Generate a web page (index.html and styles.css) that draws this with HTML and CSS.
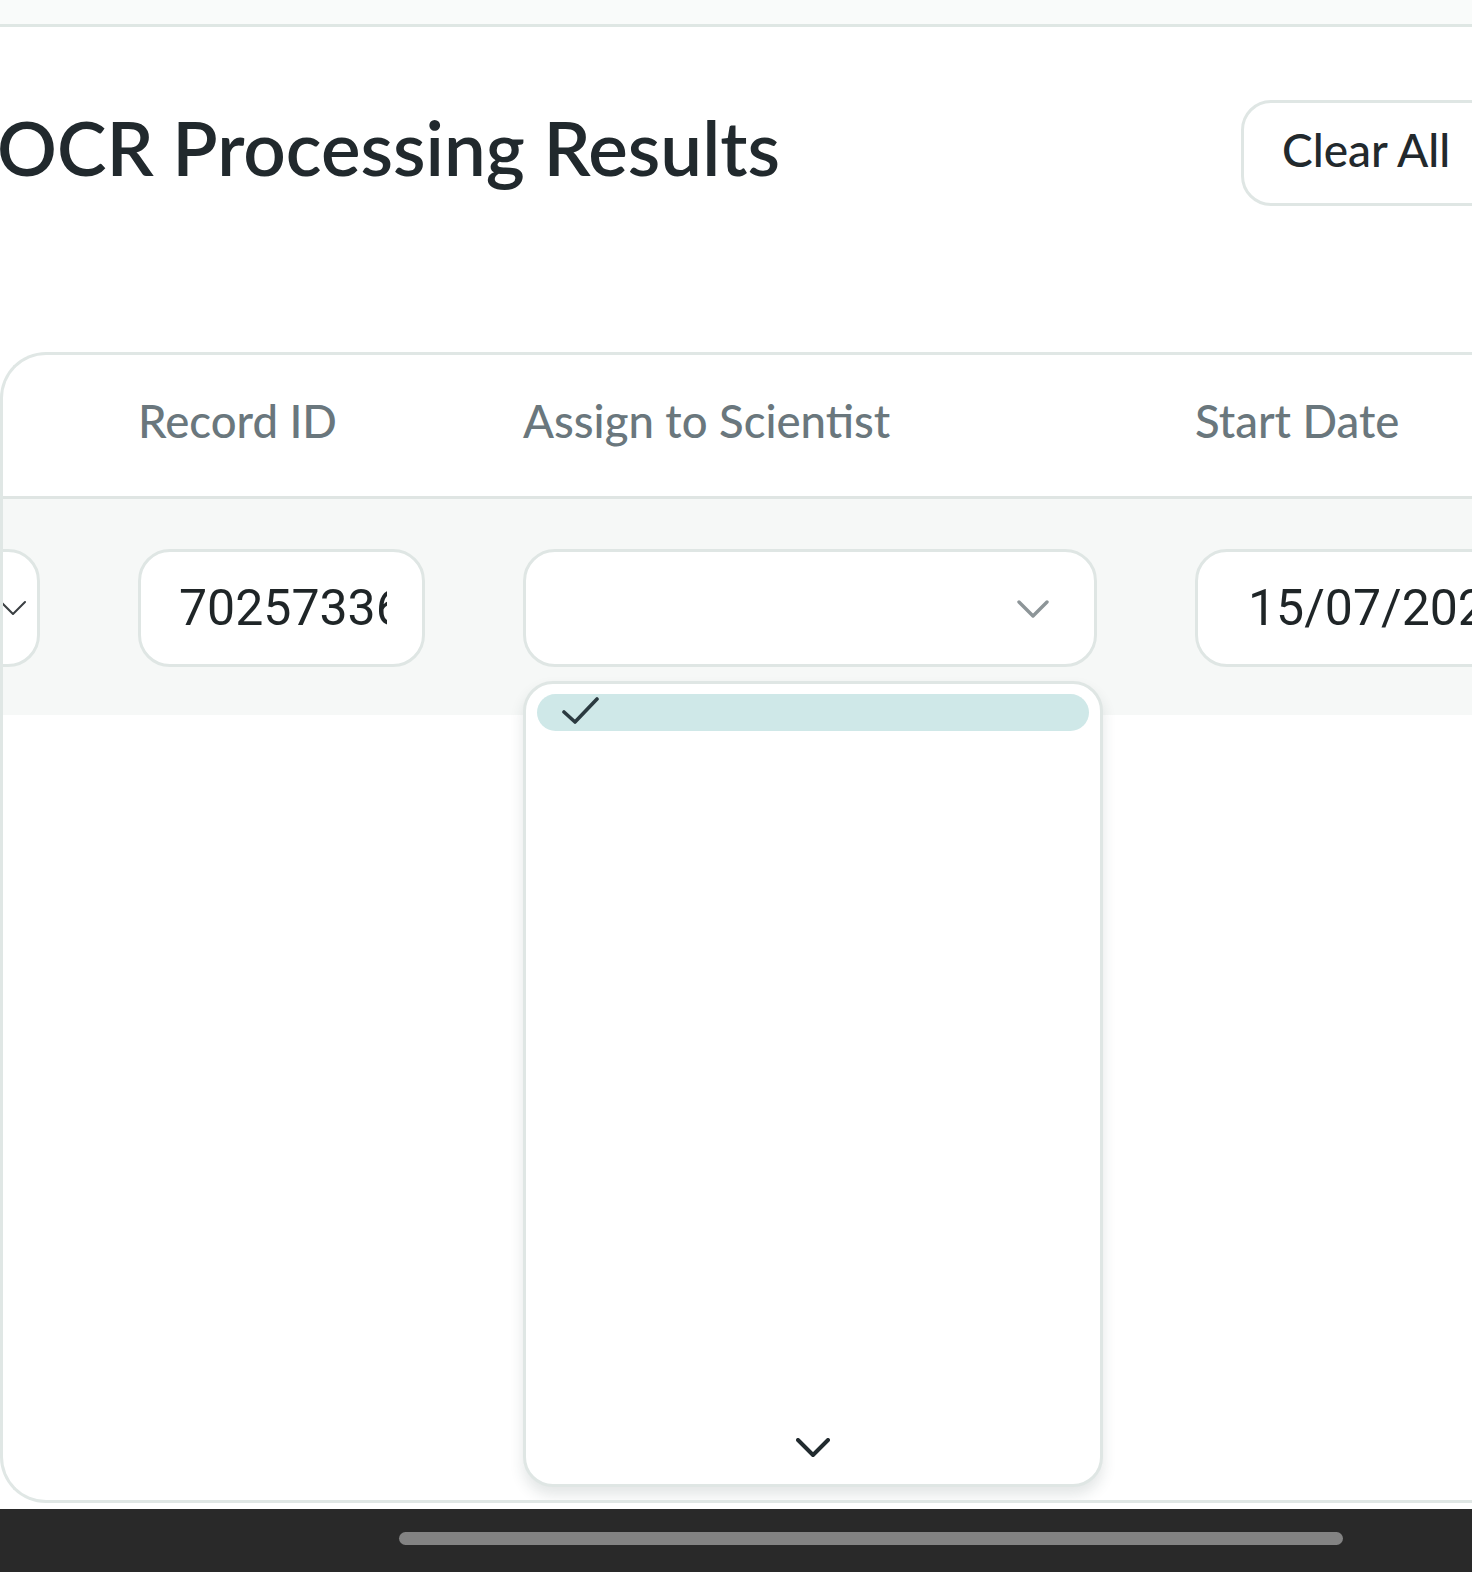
FILE: index.html
```html
<!DOCTYPE html>
<html>
<head>
<meta charset="utf-8">
<link rel="stylesheet" href="styles.css">
</head>
<body>
<div class="page">
  <div class="topbar"></div>
  <div class="head">
    <h1 class="title">OCR Processing Results</h1>
    <button class="clear">Clear All</button>
  </div>
  <div class="card">
    <div class="grid thead">
      <div class="th"></div>
      <div class="th">Record ID</div>
      <div class="th">Assign to Scientist</div>
      <div class="th">Start Date</div>
    </div>
    <div class="grid trow">
      <div class="field select-left">
        <svg class="chev-left" width="28" height="16" viewBox="0 0 28 16"><path d="M2 2 L14 14 L26 2" fill="none" stroke="#3a3f42" stroke-width="2" stroke-linecap="round" stroke-linejoin="round"/></svg>
      </div>
      <div class="field"><div class="val">70257336</div></div>
      <div class="field select-main">
        <svg class="chev-gray" width="32" height="19" viewBox="0 0 32 19"><path d="M2 2 L16 16 L30 2" fill="none" stroke="#8d9598" stroke-width="3.4" stroke-linecap="round" stroke-linejoin="round"/></svg>
        <div class="dropdown">
          <div class="option">
            <svg class="check" width="38" height="28" viewBox="0 0 38 28"><path d="M2 15 L13 25 L35 2" fill="none" stroke="#2b3a40" stroke-width="3.6" stroke-linecap="round" stroke-linejoin="round"/></svg>
          </div>
          <div class="spacer"></div>
          <svg class="chev-down" width="34" height="20" viewBox="0 0 34 20"><path d="M2 2 L17 17 L32 2" fill="none" stroke="#222b2f" stroke-width="4" stroke-linecap="round" stroke-linejoin="round"/></svg>
        </div>
      </div>
      <div class="field date"><div class="val">15/07/2025</div></div>
    </div>
  </div>
  <div class="navbar"><div class="thumb"></div></div>
</div>
</body>
</html>
```
FILE: styles.css
```css
html, body {
  margin: 0;
  padding: 0;
  background: #ffffff;
  overflow: hidden;
}
.page {
  width: 1472px;
  height: 1572px;
  display: flex;
  flex-direction: column;
  overflow: hidden;
}
.topbar {
  height: 24px;
  flex: none;
  background: #f9fbfa;
  border-bottom: 3px solid #dfe7e4;
}
.head {
  flex: none;
  margin-top: 73px;
  height: 106px;
  display: flex;
  align-items: center;
  margin-right: -30px;
}
.title {
  margin: 0 0 12px -3px;
  font-family: "Lato", "Liberation Sans", sans-serif;
  font-weight: 600;
  font-size: 74.5px;
  line-height: 1;
  color: #21292d;
  white-space: nowrap;
}
.clear {
  margin-left: auto;
  height: 106px;
  width: 261px;
  box-sizing: border-box;
  padding: 0 0 8px 38px;
  text-align: left;
  background: #ffffff;
  border: 3px solid #dfe6e4;
  border-radius: 30px;
  font-family: "Lato", "Liberation Sans", sans-serif;
  font-weight: 500;
  font-size: 46px;
  color: #22292d;
}
.card {
  flex: 1;
  margin-top: 146px;
  margin-bottom: 6px;
  border: 3px solid #e0e7e5;
  border-right: none;
  border-radius: 46px 0 0 46px;
  overflow: hidden;
  display: flex;
  flex-direction: column;
}
.grid {
  display: grid;
  grid-template-columns: 240px 287px 574px 320px;
  column-gap: 98px;
  margin-left: -203px;
  width: calc(100% + 203px);
}
.thead {
  height: 141px;
  box-sizing: content-box;
  align-items: center;
  border-bottom: 3px solid #dfe5e3;
}
.th {
  font-family: "Lato", "Liberation Sans", sans-serif;
  font-weight: 500;
  font-size: 45.5px;
  color: #6a777d;
  white-space: nowrap;
  padding-bottom: 10px;
}
.trow {
  background: #f6f8f7;
  padding: 50px 0 48px;
}
.field {
  position: relative;
  height: 118px;
  box-sizing: border-box;
  background: #ffffff;
  border: 3px solid #dfe6e4;
  border-radius: 32px;
  display: flex;
  align-items: center;
  padding: 0 35px 0 38px;
}
.val {
  overflow: hidden;
  white-space: nowrap;
  width: 100%;
  font-family: "Roboto", "Liberation Sans", sans-serif;
  font-size: 50px;
  color: #1f2527;
}
.date {
  padding-left: 50px;
  padding-right: 0;
}
.date .val {
  overflow: visible;
}
.select-left {
  justify-content: flex-end;
  padding: 0 10px 0 0;
}
.select-main {
  justify-content: flex-end;
  padding-right: 45px;
  padding-top: 2px;
}
.dropdown {
  position: absolute;
  top: 129px;
  left: -3px;
  width: 580px;
  height: 806px;
  box-sizing: border-box;
  background: #ffffff;
  border: 3px solid #dfe6e4;
  border-radius: 30px;
  box-shadow: 0 8px 14px rgba(40, 60, 60, 0.13);
  padding: 10px 11px 26px;
  display: flex;
  flex-direction: column;
  align-items: stretch;
  z-index: 5;
}
.option {
  height: 37px;
  border-radius: 19px;
  background: #cfe8e8;
  display: flex;
  align-items: center;
  padding-left: 25px;
}
.check {
  display: block;
  margin-top: -4px;
}
.spacer {
  flex: 1;
}
.chev-down {
  display: block;
  align-self: center;
}
.navbar {
  flex: none;
  height: 63px;
  box-sizing: border-box;
  background: #292929;
  padding: 23px 0 0 399px;
}
.thumb {
  width: 944px;
  height: 13px;
  border-radius: 7px;
  background: #838383;
}
```
